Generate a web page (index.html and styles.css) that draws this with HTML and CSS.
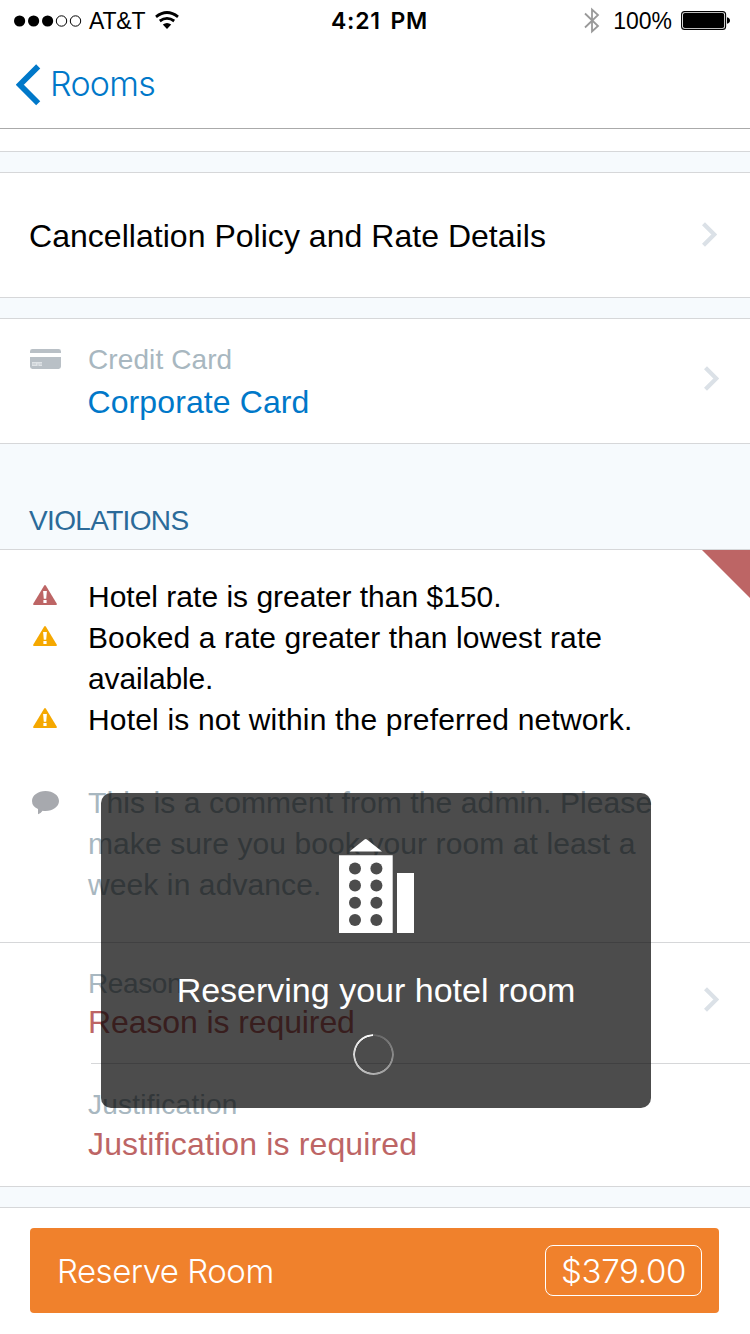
FILE: index.html
```html
<!DOCTYPE html>
<html lang="en">
<head>
<meta charset="utf-8">
<title>Reserve Room</title>
<link rel="stylesheet" href="styles.css">
</head>
<body>
<div class="screen">
  <header class="top">
    <div class="status">
      <div class="status-left">
        <svg class="signal" width="68" height="12" viewBox="0 0 68 12"><g fill="#000"><circle cx="5.6" cy="6" r="5.6"/><circle cx="19.6" cy="6" r="5.6"/><circle cx="33.6" cy="6" r="5.6"/></g><g fill="none" stroke="#000" stroke-width="1"><circle cx="47.5" cy="6" r="5.2"/><circle cx="61.5" cy="6" r="5.2"/></g></svg>
        <span class="carrier">AT&amp;T</span>
        <svg class="wifi" width="24" height="18" viewBox="0 0 24 18"><g fill="none" stroke="#000" stroke-width="2.8"><path d="M1 5.8Q12-2.8 23 5.8"/><path d="M4.8 10Q12 4.7 19.2 10"/></g><path d="M7.8 13.6Q12 10.6 16.2 13.6L12 18Z"/></svg>
      </div>
      <div class="time">4:21 PM</div>
      <div class="status-right">
        <svg width="16" height="27" viewBox="0 0 16 27"><path d="M1 6.5L14 19L8 24.5V2.5L14 8L1 20.5" fill="none" stroke="#999" stroke-width="1.8"/></svg>
        <span class="percent">100%</span>
        <svg width="49" height="19" viewBox="0 0 49 19"><rect x=".6" y=".6" width="44" height="17.8" rx="3" fill="none" stroke="#000" stroke-width="1.1"/><rect x="2" y="2" width="41.2" height="15" rx="1.8"/><path d="M46 6.2Q49 7 49 9.5T46 12.8Z"/></svg>
      </div>
    </div>
    <nav class="nav">
      <svg width="25" height="42" viewBox="0 0 25 42"><path d="M22.2 2.4L3.8 20.8L22.2 39.2" fill="none" stroke="#0078c9" stroke-width="5.8"/></svg>
      <span class="light back">Rooms</span>
    </nav>
  </header>

  <div class="strip"></div>
  <div class="gap"></div>

  <section class="row policy">
    <span class="policy-text">Cancellation Policy and Rate Details</span>
    <svg class="chevron" width="15" height="25" viewBox="0 0 15 25"><path d="M1.5 1.7L12.3 12.5L1.5 23.3" fill="none" stroke="#dbe1e7" stroke-width="4.2"/></svg>
  </section>
  <div class="gap"></div>

  <section class="row card">
    <svg class="card-icon" width="31" height="20" viewBox="0 0 31 20"><path d="M2.4 0H28.6Q31 0 31 2.4V4H0V2.4Q0 0 2.4 0ZM0 8H31V17.6Q31 20 28.6 20H2.4Q0 20 0 17.6Z" fill="#b9c0c6"/><path d="M2 13H12V17H2Z" fill="#dfe3e6"/><path d="M2.5 15H6M8 14.5V17M9.5 15H12" stroke="#b9c0c6" stroke-width=".8"/></svg>
    <div class="field">
      <div class="label">Credit Card</div>
      <div class="value link">Corporate Card</div>
    </div>
    <svg class="chevron" width="15" height="25" viewBox="0 0 15 25"><path d="M1.5 1.7L12.3 12.5L1.5 23.3" fill="none" stroke="#dbe1e7" stroke-width="4.2"/></svg>
  </section>

  <h2 class="heading">VIOLATIONS</h2>

  <section class="violations">
    <svg class="flag" width="48" height="48" viewBox="0 0 48 48"><path d="M0 0H48V48Z" fill="#bd6565"/></svg>
    <div class="item">
      <svg class="warn red" width="24" height="20" viewBox="0 0 24 20"><path d="M11.2.6Q12-.4 12.8.6L23.8 18.8Q24.2 20 23 20H1Q-.2 20 .2 18.8Z"/><path d="M10.1 6H13.9L13.2 13.8H10.8ZM10.4 15H13.6V18H10.4Z" fill="#fff"/></svg>
      <p class="v1">Hotel rate is greater than $150.</p>
    </div>
    <div class="item">
      <svg class="warn" width="24" height="20" viewBox="0 0 24 20"><path d="M11.2.6Q12-.4 12.8.6L23.8 18.8Q24.2 20 23 20H1Q-.2 20 .2 18.8Z"/><path d="M10.1 6H13.9L13.2 13.8H10.8ZM10.4 15H13.6V18H10.4Z" fill="#fff"/></svg>
      <p class="v2">Booked a rate greater than lowest rate<br><span class="tight">available.</span></p>
    </div>
    <div class="item">
      <svg class="warn" width="24" height="20" viewBox="0 0 24 20"><path d="M11.2.6Q12-.4 12.8.6L23.8 18.8Q24.2 20 23 20H1Q-.2 20 .2 18.8Z"/><path d="M10.1 6H13.9L13.2 13.8H10.8ZM10.4 15H13.6V18H10.4Z" fill="#fff"/></svg>
      <p class="v3">Hotel is not within the preferred network.</p>
    </div>
    <div class="item comment">
      <svg class="bubble" width="27" height="24" viewBox="0 0 27 24"><path d="M13.5 0C21 0 27 4.4 27 10S21 20 13.5 20Q11.8 20 10.6 19.8Q8.8 22.6 6 23.2V18Q0 15.4 0 10C0 4.4 6 0 13.5 0Z" fill="#a7a9ae"/></svg>
      <p>This is a comment from the admin. Please<br>make sure you book your room at least a<br>week in advance.</p>
    </div>
  </section>

  <section class="row reason">
    <div class="field">
      <div class="label">Reason</div>
      <div class="value error">Reason is required</div>
    </div>
    <svg class="chevron" width="15" height="25" viewBox="0 0 15 25"><path d="M1.5 1.7L12.3 12.5L1.5 23.3" fill="none" stroke="#dbe1e7" stroke-width="4.2"/></svg>
  </section>
  <div class="divider"></div>
  <section class="row justification">
    <div class="field">
      <div class="label">Justification</div>
      <div class="value error">Justification is required</div>
    </div>
  </section>
  <div class="gap"></div>

  <footer class="footer">
    <div class="reserve">
      <span class="light reserve-text">Reserve Room</span>
      <span class="light price">$379.00</span>
    </div>
  </footer>

  <div class="modal">
    <svg class="hotel" width="75" height="95" viewBox="0 0 75 95"><path fill="#fff" fill-rule="evenodd" d="M10.5 12.5L25.5.6Q26.7-.4 27.9.6L43 12.5ZM0 16.3H53.7V94H0ZM58 34H75V94H58Z"/><g fill="#4c4c4c"><circle cx="16" cy="29.4" r="6"/><circle cx="37.4" cy="29.4" r="6"/><circle cx="16" cy="46.6" r="6"/><circle cx="37.4" cy="46.6" r="6"/><circle cx="16" cy="63.7" r="6"/><circle cx="37.4" cy="63.7" r="6"/><circle cx="16" cy="81" r="6"/><circle cx="37.4" cy="81" r="6"/></g></svg>
    <div class="modal-text">Reserving your hotel room</div>
    <div class="spinner"></div>
  </div>
</div>
</body>
</html>
```

FILE: styles.css
```css
* { box-sizing: border-box; }
body { margin: 0; font-family: "Liberation Sans", Arial, sans-serif; color: #000; background: #fff; }
svg { display: block; flex: none; }
p, h2 { margin: 0; font-weight: 400; }

.screen { position: relative; width: 750px; height: 1334px; overflow: hidden; display: flex; flex-direction: column; background: #fff; }
.screen > * { flex: none; }

.top { height: 129px; border-bottom: 1px solid #aaa; }
.status { height: 41px; display: grid; grid-template-columns: 1fr auto 1fr; align-items: center; padding: 0 20px 0 14px; font-size: 23px; line-height: 26px; }
.status-left, .status-right { display: flex; align-items: center; }
.carrier { margin-left: 7px; letter-spacing: -0.2px; }
.wifi { margin-left: 10px; margin-top: -1px; }
.time { padding-left: 15px; font-family: Inter, "Liberation Sans", sans-serif; font-weight: 600; font-size: 23px; letter-spacing: 0.8px; word-spacing: 3px; }
.status-right { justify-content: flex-end; }
.percent { margin: 0 9px 0 13px; }

.nav { height: 87px; display: flex; align-items: center; padding-left: 16px; color: #0078c9; }
.light { font-family: Inter, "Liberation Sans", sans-serif; font-weight: 300; }
.back { margin-left: 9px; font-size: 34px; line-height: 40px; letter-spacing: -0.7px; margin-top: -2px; }

.strip { height: 22px; }
.gap { height: 22px; background: #f6fafd; border-top: 1px solid #d6d7d9; border-bottom: 1px solid #d6d7d9; }

.row { display: flex; align-items: flex-start; }
.chevron { margin-left: auto; align-self: center; }
.policy { height: 124px; align-items: center; padding: 0 33px 0 29px; }
.policy .chevron { margin-top: -2px; }
.policy-text { font-size: 32px; line-height: 40px; padding-top: 2px; letter-spacing: 0.03px; }

.card { height: 124px; padding: 21px 31px 0 30px; }
.card-icon { margin-top: 9px; margin-right: 27px; }
.card .chevron, .reason .chevron { align-self: flex-start; }
.card .chevron { margin-top: 26px; }
.label { font-size: 28px; line-height: 40px; color: #a8b7c0; letter-spacing: 0.1px; }
.value { font-size: 32px; line-height: 45px; letter-spacing: 0.1px; }
.link { color: #0078c9; margin-left: -0.5px; }
.error { color: #bd6565; }

.heading { height: 107px; background: #f6fafd; border-top: 1px solid #d6d7d9; border-bottom: 1px solid #d6d7d9; padding: 57px 0 0 29px; font-size: 28px; line-height: 40px; letter-spacing: -0.65px; color: #2b6a99; }

.violations { position: relative; height: 393px; padding: 26px 0 0 32px; border-bottom: 1px solid #d6d7d9; }
.flag { position: absolute; right: 0; top: 0; }
.item { display: flex; font-size: 30px; line-height: 41px; letter-spacing: 0.1px; }
.v1 { letter-spacing: 0; }
.tight { letter-spacing: -0.15px; }
.v3 { letter-spacing: 0.18px; }
.warn { margin: 9px 31px 0 1px; fill: #f5a800; }
.warn.red { fill: #bd6565; }
.comment { margin-top: 42px; color: #a8b7c0; }
.bubble { margin: 9px 29px 0 0; }

.reason { height: 120px; padding: 21px 31px 0 88px; }
.reason .label { letter-spacing: -0.4px; }
.reason .value { line-height: 37px; letter-spacing: -0.1px; }
.reason .chevron { margin-top: 23px; }
.divider { height: 1px; margin-left: 91px; background: #d6d7d9; }
.justification { height: 122px; padding: 21px 0 0 88px; }
.justification .label { letter-spacing: 0.25px; }
.justification .value { line-height: 39px; letter-spacing: 0.15px; }

.footer { padding: 20px 31px 0 30px; }
.reserve { height: 85px; border-radius: 4px; background: #f0812c; color: #fff; display: flex; align-items: center; justify-content: space-between; padding: 0 17px 0 27px; }
.reserve-text { font-size: 33px; line-height: 40px; letter-spacing: -0.5px; }
.price { width: 157px; height: 51px; border: 1px solid #fff; border-radius: 8px; font-size: 33px; line-height: 50px; text-align: center; letter-spacing: -0.3px; }

.modal { position: absolute; left: 101px; top: 793px; width: 550px; height: 315px; border-radius: 10px; background: rgba(0, 0, 0, 0.7); color: #fff; }
.hotel { margin: 46px 0 0 238px; }
.modal-text { margin-top: 36px; text-align: center; font-size: 34px; line-height: 40px; letter-spacing: 0; }
.spinner { width: 41px; height: 41px; margin: 24px 0 0 252px; border-radius: 50%; background: conic-gradient(rgba(255,255,255,0.12), #fff); mask: radial-gradient(circle at center, transparent 18px, #000 18.6px); }
```
